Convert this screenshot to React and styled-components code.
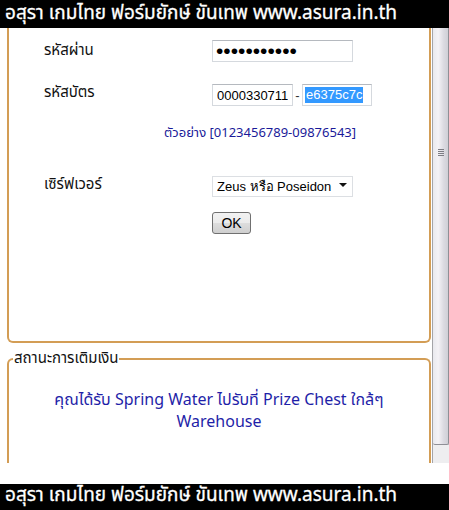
import styled, { createGlobalStyle } from 'styled-components';

const Global = createGlobalStyle`
    html, body {
        margin: 0;
        padding: 0;
        background: #ffffff;
        overflow: hidden;
    }
    body {
        width: 449px;
        height: 510px;
        font-family: Tahoma, "Noto Sans Thai", "Noto Sans", "DejaVu Sans", sans-serif;
    }
`

const Banner = styled.div`
    height: ${props => props.h}px;
    box-sizing: border-box;
    padding-top: ${props => props.pt || 0}px;
    background: #000000;
    color: #ffffff;
    font-size: 19px;
    line-height: 24px;
    padding-left: 5px;
    white-space: nowrap;
    -webkit-text-stroke: 0.3px #ffffff;
`

const Viewport = styled.div`
    display: flex;
    height: 435px;
    overflow: hidden;
`

const Content = styled.div`
    flex: 1;
    padding: 0 1px 0 7px;
    display: flex;
    flex-direction: column;
`

const Panel = styled.div`
    height: 315px;
    flex-shrink: 0;
    border: 2px solid #d39d55;
    border-top: none;
    border-radius: 0 0 6px 6px;
    padding: 11px 0 0 35px;
    box-sizing: border-box;
    color: #111;
`

const Row = styled.div`
    display: flex;
    align-items: ${props => props.top ? 'flex-start' : 'center'};
    margin-top: ${props => props.gap || 0}px;
`

const Label = styled.div`
    width: 168px;
    font-size: 15px;
    margin-top: ${props => props.top ? -3 : 0}px;
`

const TextBox = styled.input`
    box-sizing: border-box;
    width: ${props => props.w}px;
    height: 22px;
    border: 1px solid #d5d9de;
    border-top-color: #b5b9bf;
    padding: 0 4px;
    font-family: "Liberation Sans", Arial, sans-serif;
    font-size: 13px;
    color: #000;
    background: #fff;
    outline: none;
`

const PasswordBox = styled(TextBox)`
    font-size: 21px;
    letter-spacing: 0px;
    padding: 0 0 0 3px;
    line-height: 20px;
`

const FakeBox = styled.div`
    box-sizing: border-box;
    width: ${props => props.w}px;
    height: 22px;
    border: 1px solid #d5d9de;
    border-top-color: #b5b9bf;
    padding: 2px 2px;
    font-family: "Liberation Sans", Arial, sans-serif;
    font-size: 13px;
    line-height: 16px;
    background: #fff;
`

const Selected = styled.span`
    background: #3399ff;
    color: #ffffff;
    display: inline-block;
    height: 16px;
    padding: 0 1px;
`

const Dash = styled.span`
    align-self: center;
    width: 9px;
    text-align: center;
    font-family: "Liberation Sans", Arial, sans-serif;
    font-size: 13px;
    color: #333;
`

const Example = styled.div`
    margin: 18px 0 0 120px;
    font-size: 13px;
    line-height: 18px;
    color: #1a1a99;
`

const SelectWrap = styled.div`
    position: relative;
    width: 141px;
    height: 21px;
`

const Select = styled.select`
    appearance: none;
    box-sizing: border-box;
    width: 141px;
    height: 21px;
    border: 1px solid #dcdfe3;
    background: #fff;
    padding: 0 0 0 4px;
    font-family: "Liberation Sans", Arial, sans-serif;
    font-size: 13px;
    color: #000;
    outline: none;
`

const Arrow = styled.span`
    position: absolute;
    right: 6px;
    top: 9px;
    width: 0;
    height: 0;
    border-left: 4px solid transparent;
    border-right: 4px solid transparent;
    border-top: 4px solid #111;
    pointer-events: none;
`

const Button = styled.button`
    margin-left: 168px;
    width: 39px;
    height: 22px;
    border: 1px solid #707070;
    border-radius: 3px;
    background: linear-gradient(#f2f2f2 0%, #ebebeb 50%, #dddddd 51%, #cfcfcf 100%);
    font-family: "Liberation Sans", Arial, sans-serif;
    font-size: 14px;
    color: #000;
    padding: 0;
`

const Fieldset = styled.fieldset`
    margin: 4px 0 0 0;
    flex: 1;
    border: 2px solid #d39d55;
    border-bottom: none;
    border-radius: 6px 6px 0 0;
    padding: 0;
    min-width: 0;
`

const Legend = styled.legend`
    margin-left: 4px;
    padding: 0 1px;
    font-size: 15px;
    color: #111;
`

const Message = styled.div`
    margin-top: 19px;
    text-align: center;
    font-size: 16px;
    line-height: 22px;
    color: #1f1fa8;
`

const Scrollbar = styled.div`
    width: 16px;
    display: flex;
    flex-direction: column;
    border-left: 1px solid #a4a4a8;
    background: #eeeef0;
`

const Thumb = styled.div`
    height: 417px;
    box-sizing: border-box;
    border: 1px solid #8f8f96;
    border-top: none;
    border-left: none;
    border-radius: 0 0 2px 2px;
    background: linear-gradient(to right, #e9e9ee 0%, #f4f2f6 35%, #dcdbe2 70%, #cfcfd6 100%);
    display: flex;
    justify-content: center;
    padding-top: 121px;
`

const Grip = styled.div`
    width: 6px;
    height: 7px;
    background: repeating-linear-gradient(#7d7d84 0 1px, transparent 1px 2px);
`

const Gap = styled.div`
    height: 21px;
`

const App = () => {
    return (
        <>
            <Global />
            <Banner h={28} pt={2}>อสุรา เกมไทย ฟอร์มยักษ์ ขันเทพ www.asura.in.th</Banner>
            <Viewport>
                <Content>
                    <Panel>
                        <Row>
                            <Label>รหัสผ่าน</Label>
                            <PasswordBox type="password" w={141} defaultValue="12345678901" />
                        </Row>
                        <Row gap={22} top>
                            <Label top>รหัสบัตร</Label>
                            <TextBox w={81} defaultValue="0000330711" />
                            <Dash>-</Dash>
                            <FakeBox w={70}><Selected>e6375c7c</Selected></FakeBox>
                        </Row>
                        <Example>ตัวอย่าง [0123456789-09876543]</Example>
                        <Row gap={31}>
                            <Label>เซิร์ฟเวอร์</Label>
                            <SelectWrap>
                                <Select defaultValue="zeus">
                                    <option value="zeus">Zeus หรือ Poseidon</option>
                                </Select>
                                <Arrow />
                            </SelectWrap>
                        </Row>
                        <Row gap={16}>
                            <Button>OK</Button>
                        </Row>
                    </Panel>
                    <Fieldset>
                        <Legend>สถานะการเติมเงิน</Legend>
                        <Message>
                            คุณได้รับ Spring Water ไปรับที่ Prize Chest ใกล้ๆ<br />Warehouse
                        </Message>
                    </Fieldset>
                </Content>
                <Scrollbar>
                    <Thumb><Grip /></Thumb>
                </Scrollbar>
            </Viewport>
            <Gap />
            <Banner h={26} pt={0}>อสุรา เกมไทย ฟอร์มยักษ์ ขันเทพ www.asura.in.th</Banner>
        </>
    );
}

export default App;
